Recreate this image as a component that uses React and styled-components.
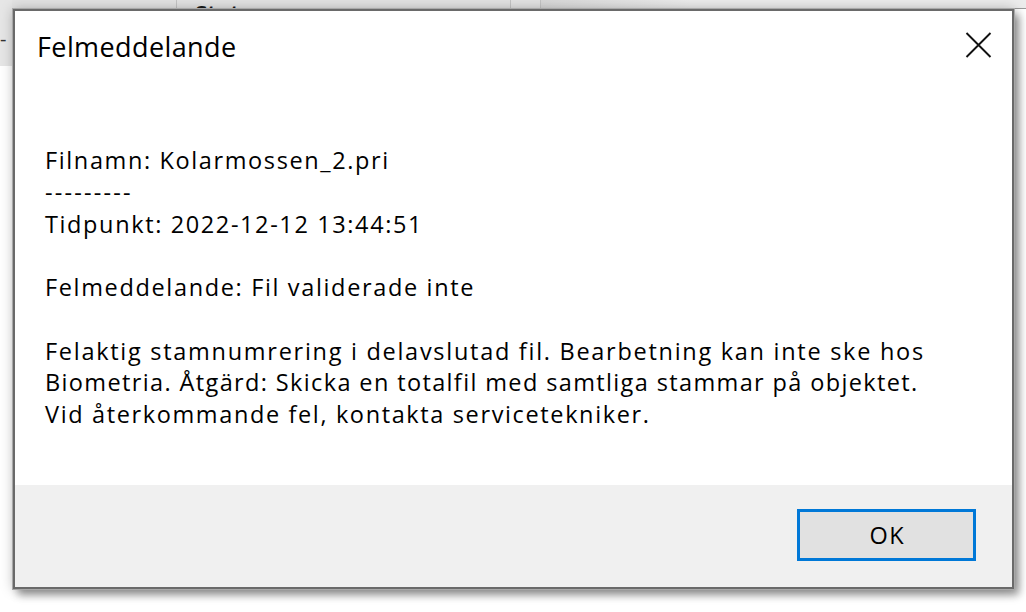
import React from 'react'
import styled, { createGlobalStyle } from 'styled-components'

const GlobalStyle = createGlobalStyle`
  html, body {
    margin: 0;
    padding: 0;
    background: #fff;
  }
  body {
    font-family: "Segoe UI", "Open Sans", "Noto Sans", sans-serif;
    color: #000;
  }
`

// text + letter spacing that keeps each line as wide as the original rendering
const message = [
  ['Filnamn: Kolarmossen_2.pri', 1.62],
  ['---------', 2.2],
  ['Tidpunkt: 2022-12-12 13:44:51', 1.62],
  ['', 0],
  ['Felmeddelande: Fil validerade inte', 1.65],
  ['', 0],
  ['Felaktig stamnumrering i delavslutad fil. Bearbetning kan inte ske hos', 1.72],
  ['Biometria. Åtgärd: Skicka en totalfil med samtliga stammar på objektet.', 1.37],
  ['Vid återkommande fel, kontakta servicetekniker.', 1.63],
]

const App = () => {
  return (
    <Desktop>
      <GlobalStyle />
      <BackWindow>
        <HeaderCell width={177} />
        <HeaderCell width={334}>
          <span>Status</span>
        </HeaderCell>
        <HeaderCell width={30} />
        <HeaderCell width={500} faded />
      </BackWindow>
      <SidePanel>
        <span className='dash'>-</span>
        <span className='dot' />
      </SidePanel>
      <Dialog>
        <TitleBar>
          <Title>Felmeddelande</Title>
          <CloseButton aria-label='Stäng'>
            <svg width='27' height='26' viewBox='0 0 27 26'>
              <path d='M1.5 1 L25.5 25 M25.5 1 L1.5 25' stroke='#111' strokeWidth='1.9' fill='none' />
            </svg>
          </CloseButton>
        </TitleBar>
        <Body>
          {message.map(([text, spacing], i) => (
            <Line key={i} spacing={spacing}>{text}</Line>
          ))}
        </Body>
        <Footer>
          <OkButton>OK</OkButton>
        </Footer>
      </Dialog>
    </Desktop>
  )
}

export default App

const Desktop = styled.div`
  position: relative;
  width: 1026px;
  height: 612px;
  overflow: hidden;
  background: #fff;
`

const BackWindow = styled.div`
  position: absolute;
  top: -30px;
  left: 0;
  width: 1026px;
  height: 38px;
  display: flex;
  background: #e3e3e3;
  border-bottom: 1px solid #9a9a9a;
`

const HeaderCell = styled.div`
  width: ${p => p.width}px;
  flex-shrink: 0;
  border-right: 1px solid #c4c4c4;
  display: flex;
  align-items: flex-end;
  padding-left: 18px;
  box-sizing: border-box;
  background: ${p => (p.faded ? 'linear-gradient(90deg, #d8d8d8, #ececec 30%, #ececec)' : 'transparent')};
  span {
    font-size: 22px;
    font-weight: 700;
    line-height: 22px;
    margin-bottom: -15px;
    color: #1a1a1a;
  }
`

const SidePanel = styled.div`
  position: absolute;
  top: 0;
  left: 0;
  width: 12px;
  height: 66px;
  background: #e6e6e6;
  .dash {
    position: absolute;
    left: 0;
    top: 29px;
    font-size: 20px;
    line-height: 20px;
    color: #333;
  }
  .dot {
    position: absolute;
    left: 12px;
    top: 34px;
    width: 2px;
    height: 2px;
    background: #d88a2a;
  }
`

const Dialog = styled.div`
  position: absolute;
  left: 13px;
  top: 9px;
  width: 1001px;
  height: 580px;
  box-sizing: border-box;
  display: flex;
  flex-direction: column;
  background: #fff;
  border: 2px solid #6a6a6a;
  box-shadow: 0 0 0 1px #a8a8a8, 0 0 12px rgba(0, 0, 0, 0.25), 5px 6px 8px rgba(0, 0, 0, 0.38);
`

const TitleBar = styled.div`
  height: 72px;
  flex-shrink: 0;
  display: flex;
  align-items: center;
  justify-content: space-between;
  padding-left: 22px;
  padding-right: 11px;
`

const Title = styled.div`
  font-size: 27px;
  line-height: 32px;
  letter-spacing: 0.4px;
  color: #000;
`

const CloseButton = styled.button`
  width: 46px;
  height: 46px;
  margin-top: -4px;
  border: none;
  background: transparent;
  padding: 0;
  display: flex;
  align-items: center;
  justify-content: center;
`

const Body = styled.div`
  flex: 1;
  padding: 62px 30px 0;
`

const Line = styled.div`
  font-size: 23.5px;
  line-height: 31.75px;
  height: 31.75px;
  letter-spacing: ${p => p.spacing}px;
  white-space: pre;
`

const Footer = styled.div`
  height: 102px;
  flex-shrink: 0;
  box-sizing: border-box;
  background: #f0f0f0;
  display: flex;
  justify-content: flex-end;
  align-items: flex-start;
  padding: 24px 36px 0 0;
`

const OkButton = styled.button`
  width: 179px;
  height: 52px;
  box-sizing: border-box;
  border: 3px solid #0078d7;
  background: #e1e1e1;
  font-family: inherit;
  font-size: 23.5px;
  letter-spacing: 1.5px;
  color: #000;
  padding: 0 0 0 1.5px;
`
